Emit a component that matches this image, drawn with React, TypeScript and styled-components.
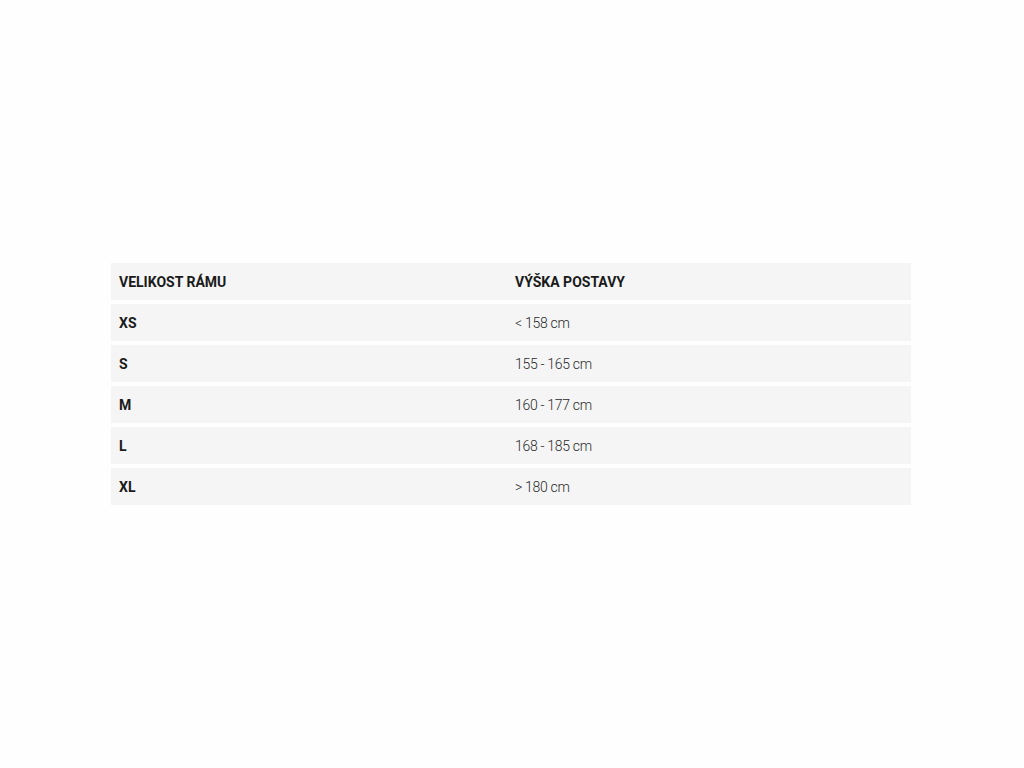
import React from "react";
import styled, { createGlobalStyle } from "styled-components";

const GlobalStyle = createGlobalStyle`
  html, body {
    margin: 0;
    padding: 0;
    background: #fefefe;
  }
  body {
    font-family: Roboto, "Noto Sans", sans-serif;
    color: #1e1e1e;
  }
`;

const Page = styled.div`
  padding-top: 263px;
  padding-left: 111px;
`;

const Table = styled.div`
  width: 800px;
  display: flex;
  flex-direction: column;
  gap: 4px;
`;

const Row = styled.div`
  display: grid;
  grid-template-columns: 396px 1fr;
  height: 37px;
  background: #f5f5f5;
  align-items: center;
`;

const Cell = styled.div<{ $bold?: boolean }>`
  padding: 0 8px;
  font-size: 14px;
  letter-spacing: ${(p) => (p.$bold ? "0" : "-0.3px")};
  font-weight: ${(p) => (p.$bold ? 700 : 300)};
  color: ${(p) => (p.$bold ? "#1a1a1a" : "#2a2a2a")};
  white-space: nowrap;
`;

const rows = [
  ["XS", "< 158 cm"],
  ["S", "155 - 165 cm"],
  ["M", "160 - 177 cm"],
  ["L", "168 - 185 cm"],
  ["XL", "> 180 cm"],
];

export default function App() {
  return (
    <Page>
      <GlobalStyle />
      <Table>
        <Row>
          <Cell $bold>VELIKOST RÁMU</Cell>
          <Cell $bold>VÝŠKA POSTAVY</Cell>
        </Row>
        {rows.map(([size, height]) => (
          <Row key={size}>
            <Cell $bold>{size}</Cell>
            <Cell>{height}</Cell>
          </Row>
        ))}
      </Table>
    </Page>
  );
}
